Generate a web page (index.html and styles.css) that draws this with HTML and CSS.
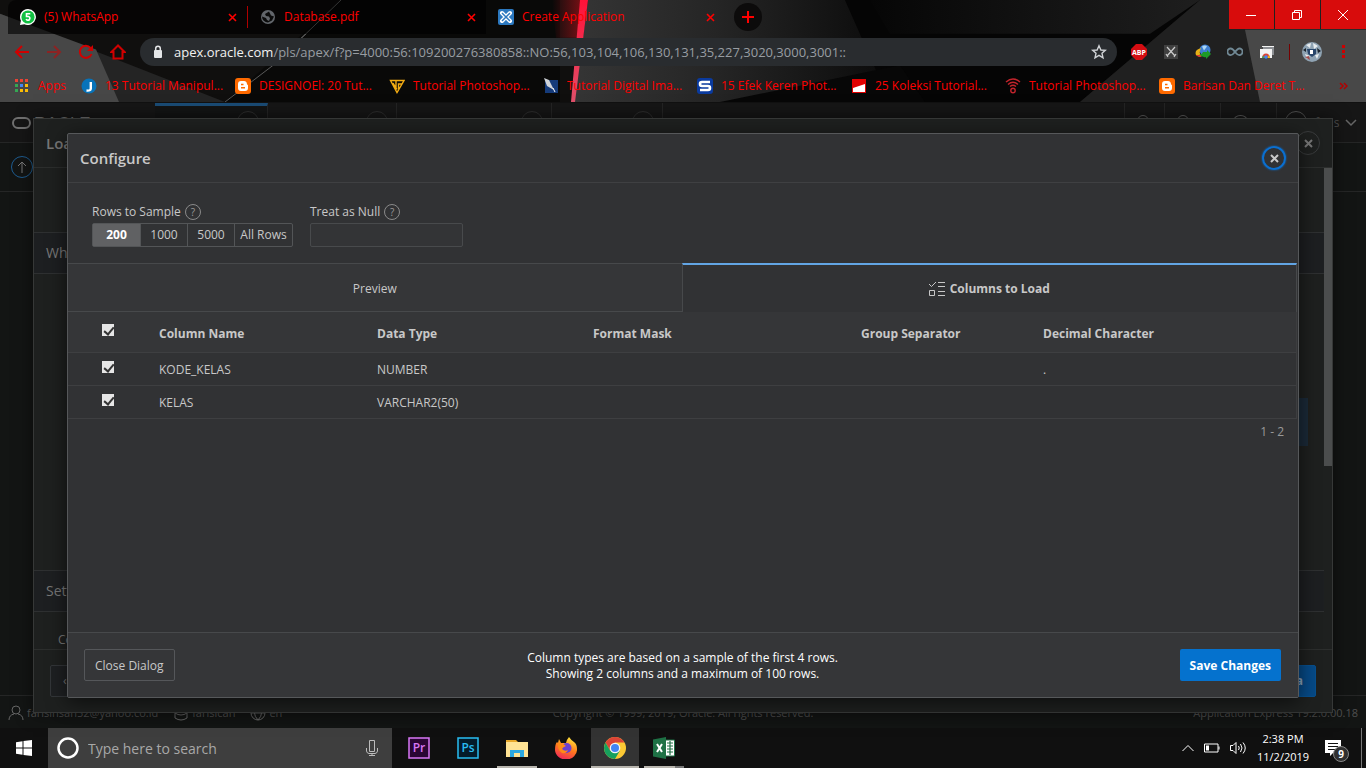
FILE: index.html
```
<!DOCTYPE html>
<html lang="en">
<head>
<meta charset="utf-8">
<title>Create Application</title>
<link rel="stylesheet" href="styles.css">
</head>
<body>
<header class="browser">
  <svg class="theme" viewBox="0 0 1366 103" preserveAspectRatio="none" aria-hidden="true">
    <defs>
      <linearGradient id="mid" x1="0" x2="1"><stop offset="0" stop-color="#353535"/><stop offset=".45" stop-color="#252525"/><stop offset="1" stop-color="#0b0b0b"/></linearGradient>
      <linearGradient id="glow" x1="0" x2="1"><stop offset="0" stop-color="#b01018" stop-opacity="0"/><stop offset="1" stop-color="#c01018" stop-opacity=".6"/></linearGradient>
      <linearGradient id="beam" x1="0" x2="0" y1="0" y2="1"><stop offset="0" stop-color="#ff1238"/><stop offset="1" stop-color="#e0506a"/></linearGradient>
      <linearGradient id="east" x1="0" x2="1"><stop offset="0" stop-color="#060606"/><stop offset="1" stop-color="#1e1e1e"/></linearGradient>
    </defs>
    <path fill="#100f0e" d="M0 0H1366V103H0z"/>
    <path fill="#242424" d="M0 14 225 103H0z"/>
    <path fill="#474747" d="M0 14 96 50 119 103H0z"/>
    <path fill="#000" opacity=".4" d="M225 103 341 0H560V103z"/>
    <path stroke="#8a8a8a" stroke-width="1" d="M341 0 273 66"/>
    <path stroke="#5a5a5a" stroke-width="1" d="M273 66 225 103"/>
    <path fill="url(#mid)" d="M588 0H845L890 103H574z"/>
    <path fill="#050505" d="M845 0H1200L1080 103H890z"/>
    <path fill="url(#east)" d="M870 0H1200L1150 34H890z"/>
    <path fill="#070707" d="M720 103 900 66 925 103z"/>
    <path fill="url(#glow)" d="M552 0H582L579 38H556z"/>
    <path fill="url(#beam)" d="M580 0H588L575 103H571z"/>
    <path fill="#202020" d="M1200 0H1366V103H1080z"/>
    <path fill="#484848" d="M1245 30H1366V103H1260z"/>
  </svg>
  <div class="tabstrip">
    <div class="tab">
      <svg class="i16" viewBox="0 0 16 16"><path fill="#fff" d="M8 0a8 8 0 1 1-3.600 15.200L0 16l.9-4.300A8 8 0 0 1 8 0z"/><circle cx="8" cy="8" r="6.600" fill="#12c143"/><path fill="none" stroke="#fff" stroke-width="1.600" d="M10.300 4.800H6.500V7.500H8.500a1.900 1.900 0 1 1-2.300 2.500"/></svg>
      <span>(5) WhatsApp</span><button class="x" aria-label="Close WhatsApp tab"><svg class="i9" viewBox="0 0 9 9"><path d="M1 1 8 8M8 1 1 8"/></svg></button>
    </div>
    <div class="tab divided">
      <svg class="i16" viewBox="0 0 16 16"><circle cx="8" cy="8" r="7" fill="#62666b"/><path fill="#0b0b0b" d="M9 2.500 5 5l1 2 3 .5 1 2-1 2.500-2-1-1-2-4-1.500a6 6 0 0 0 6 6l4-2 2-4-3-1-1-2z"/></svg>
      <span>Database.pdf</span><button class="x" aria-label="Close Database tab"><svg class="i9" viewBox="0 0 9 9"><path d="M1 1 8 8M8 1 1 8"/></svg></button>
    </div>
    <div class="tab active">
      <svg class="i16" viewBox="0 0 16 16"><rect width="16" height="16" rx="2" fill="#2b78bf"/><g stroke="#fff" stroke-width="4" stroke-linecap="round"><path d="M4 4 12 12M12 4 4 12"/></g><g stroke="#2b78bf" stroke-width="1.500"><path d="M4 4 12 12M12 4 4 12"/></g></svg>
      <span>Create Application</span><button class="x" aria-label="Close Create Application tab"><svg class="i9" viewBox="0 0 9 9"><path d="M1 1 8 8M8 1 1 8"/></svg></button>
    </div>
    <button class="newtab" aria-label="New tab"><svg width="12" height="12" viewBox="0 0 12 12"><path d="M6 0V12M0 6H12"/></svg></button>
    <div class="winbtns">
      <button aria-label="Minimize"><svg width="12" height="12" viewBox="0 0 12 12"><path d="M1 6.500H11"/></svg></button>
      <button aria-label="Restore"><svg width="12" height="12" viewBox="0 0 12 12"><path d="M1.500 3.500H8.500V10.500H1.500zM3.500 3V1.500H10.500V8.500H9"/></svg></button>
      <button aria-label="Close"><svg width="12" height="12" viewBox="0 0 12 12"><path d="M1 1 11 11M11 1 1 11"/></svg></button>
    </div>
  </div>
  <div class="toolbar">
    <div class="nav">
      <button aria-label="Back"><svg class="i16" viewBox="0 0 16 16"><path d="M15 8H2M8 2 2 8 8 14"/></svg></button>
      <button class="dim" aria-label="Forward"><svg class="i16" viewBox="0 0 16 16"><path d="M1 8H14M8 2 14 8 8 14"/></svg></button>
      <button aria-label="Reload"><svg class="i16" viewBox="0 0 16 16"><path d="M13.500 10A6 6 0 1 1 12.500 4"/><path fill="#d00000" stroke="none" d="M15 1V7H9z"/></svg></button>
      <button aria-label="Home"><svg class="i16" viewBox="0 0 16 16"><path d="M8 1.500 1.500 8H3.500V14.500H12.500V8H14.500z"/></svg></button>
    </div>
    <div class="url">
      <svg width="10" height="14" viewBox="0 0 10 14"><rect x="1" y="5" width="8" height="8" rx="1" fill="#e4e6e8"/><path fill="none" stroke="#e4e6e8" stroke-width="1.500" d="M2.700 6V3.500a2.300 2.300 0 0 1 4.600 0V6"/></svg>
      <p><b>apex.oracle.com</b>/pls/apex/f?p=4000:56:109200276380858::NO:56,103,104,106,130,131,35,227,3020,3000,3001::</p>
      <button class="star" aria-label="Bookmark this page"><svg class="i16" viewBox="0 0 16 16"><path fill="none" stroke="#d0d3d6" stroke-width="1.400" d="M8 1.800 9.900 6l4.400.4L11 9.300 12 13.800 8 11.400 4 13.800 5 9.300 1.700 6.400 6.100 6z"/></svg></button>
    </div>
    <div class="exts">
      <svg class="i16" viewBox="0 0 16 16"><path fill="#d40d12" d="M5 0H11L16 5V11L11 16H5L0 11V5z"/><text x="8" y="11" class="abp">ABP</text></svg>
      <svg class="i16" viewBox="0 0 16 16"><rect x="1" y="1" width="14" height="14" fill="#404040"/><path stroke="#ccc" stroke-width="1.200" d="M4 3 12 12M12 3 4 12M3 10 5 13M13 10 11 13"/></svg>
      <svg class="i16" viewBox="0 0 16 16"><circle cx="10" cy="6" r="5.500" fill="#3f7fd0"/><path fill="#a9d5f5" d="M7 2.500q3-2 5 0l-3 4z"/><path fill="#e8b117" d="M6 4Q-1 6 1 11q3 3 6 1-4-2-1-8z"/><path fill="#d33" d="M1 11q3 3 6 1l-2-1z"/><path fill="#1d9a25" d="M8 8h4V6l4 4-5 5v-2Q7 14 4 10q3 1 4-2z"/></svg>
      <svg class="i16" viewBox="0 0 16 16"><path fill="none" stroke="#708894" stroke-width="1.800" d="M8 8C6 5 5 4.500 3.700 4.500a3.300 3.300 0 0 0 0 6.600C5 11.100 6 10.500 8 8s3-3.500 4.300-3.500a3.300 3.300 0 0 1 0 6.600C11 11.100 10 10.500 8 8z"/></svg>
      <svg class="i16" viewBox="0 0 16 16"><rect x="4" y="2" width="11" height="9" fill="#8d9094"/><path stroke="#f3f3f3" d="M3 2.500H15"/><rect x="1" y="5" width="12" height="9" fill="#f3f3f3"/><path fill="#db4437" d="M3 14a4 4.500 0 0 1 8 0z"/><path fill="#3aa757" d="M3 14 4 11.500l2 2.500z"/><path fill="#f4c20d" d="M8.500 14l1.500-3 1 3z"/><circle cx="7" cy="13" r="1.700" fill="#4285f4"/></svg>
    </div>
    <span class="sep"></span>
    <svg class="avatar" viewBox="0 0 20 20"><circle cx="10" cy="10" r="10" fill="#8fa3b3"/><path fill="#e8edf0" d="M4 3 9 1 8 6zM11 1l5 3-4 3zM3 12l5 2-3 3zM13 13l4-1-2 5z"/><path fill="#28466b" d="M5 7H14V12L10 15 6 12z"/><path fill="#fff" d="M8 8h3v4H8z"/><path fill="#a04b4b" d="M3 15l4-1 1 4z"/><path fill="#1c2630" d="M15 6l4 3-3 2zM1 8l3-2v4z"/></svg>
    <button class="more" aria-label="Menu"><svg width="4" height="14" viewBox="0 0 4 14"><path d="M0 0H3V3H0zM0 5H3V8H0zM0 10H3V13H0z"/></svg></button>
  </div>
  <nav class="bookmarks">
    <a href="#" class="apps"><svg class="i16" viewBox="0 0 16 16"><path fill="#ea4335" d="M1 1H4V4H1zM6 1H9V4H6zM11 1H14V4H11z"/><path fill="#34a853" d="M1 6H4V9H1zM1 11H4V14H1z"/><path fill="#4285f4" d="M6 6H9V9H6z"/><path fill="#fbbc05" d="M11 6H14V9H11zM6 11H9V14H6zM11 11H14V14H11z"/></svg><span>Apps</span></a>
    <a href="#"><svg class="i16" viewBox="0 0 16 16"><circle cx="8" cy="8" r="7.500" fill="#0873b9"/><path fill="none" stroke="#fff" stroke-width="2.400" d="M9.800 4V10.500q0 2.500-4.300 2"/></svg><span>13 Tutorial Manipul...</span></a>
    <a href="#"><svg class="i16" viewBox="0 0 16 16"><rect width="16" height="16" rx="3" fill="#ff6a00"/><path fill="#fff" d="M6 3H9q3 0 3 3.500 1 0 1 1V10q0 3-3 3H6q-3 0-3-3V6q0-3 3-3z"/><path stroke="#ff6a00" stroke-width="1.500" d="M6 6.500H8.500M6 9.800H10"/></svg><span>DESIGNOEl: 20 Tut...</span></a>
    <a href="#"><svg class="i16" viewBox="0 0 16 16"><path fill="none" stroke="#f2ab13" stroke-width="1.400" d="M1.500 2.500H15L8 14.500zM4 5 8 11.500M7 3V11M9.500 11V6H13"/></svg><span>Tutorial Photoshop...</span></a>
    <a href="#"><svg class="i16" viewBox="0 0 16 16"><path fill="#153b7a" d="M2 2H15V15H2z"/><path fill="#cfd3d8" d="M1 0 6 2 11 12 4 8z"/><path stroke="#fff" d="M10 10 12 14"/></svg><span>Tutorial Digital Ima...</span></a>
    <a href="#"><svg class="i16" viewBox="0 0 16 16"><rect width="16" height="16" rx="3" fill="#0a3a9e"/><path fill="none" stroke="#fff" stroke-width="2.600" d="M13 4H5Q3 4 3 6T5 8H11Q13 8 13 10T11 12H3"/></svg><span>15 Efek Keren Phot...</span></a>
    <a href="#"><svg class="i16" viewBox="0 0 16 16"><rect x="1" y="1" width="14" height="14" fill="#e00000"/><path fill="#fff" d="M2 14V10L14 6V14z"/></svg><span>25 Koleksi Tutorial...</span></a>
    <a href="#"><svg class="i16" viewBox="0 0 16 16"><g fill="none" stroke="#c2242c" stroke-width="1.400"><path d="M1 4Q8-2 15 4M3 6.500Q8 2 13 6.500M5 8.500Q8 6 11 8.500"/><circle cx="8" cy="12.500" r="2.200"/></g></svg><span>Tutorial Photoshop...</span></a>
    <a href="#"><svg class="i16" viewBox="0 0 16 16"><rect width="16" height="16" rx="3" fill="#ff6a00"/><path fill="#fff" d="M6 3H9q3 0 3 3.500 1 0 1 1V10q0 3-3 3H6q-3 0-3-3V6q0-3 3-3z"/><path stroke="#ff6a00" stroke-width="1.500" d="M6 6.500H8.500M6 9.800H10"/></svg><span>Barisan Dan Deret T...</span></a>
    <button class="overflow" aria-label="More bookmarks"><svg width="9" height="8" viewBox="0 0 9 8"><path d="M1 1 4 4 1 7M5 1 8 4 5 7"/></svg></button>
  </nav>
</header>

<main class="page">
  <div class="apex">
    <div class="topbar">
      <div class="logo"><i></i><span>RACLE</span></div>
      <div class="menu current"><i></i></div>
      <div class="menu m2"><i></i></div>
      <div class="menu m3"><i></i></div>
      <div class="menu m4"><i></i></div>
      <div class="tools">
        <div class="tool t1"><i></i></div><div class="tool t2"><i></i></div><div class="tool t2"><i class="wide"></i></div>
        <div class="user"><i class="ring"></i><span>faris</span><svg width="12" height="8" viewBox="0 0 12 8"><path fill="none" stroke="#666" stroke-width="1.500" d="M1 1 6 6 11 1"/></svg></div>
      </div>
    </div>
    <div class="crumbs"><button aria-label="Up"><svg width="12" height="12" viewBox="0 0 12 12"><path fill="none" stroke="#777" d="M6 12V1M2 5 6 1 10 5"/></svg></button></div>
    <footer class="apexfoot">
      <div class="who">
        <svg class="i16" viewBox="0 0 16 16"><circle cx="8" cy="5" r="4"/><path d="M1 15q0-5 5-6M15 15q0-5-5-6"/></svg><span>farisinsan52@yahoo.co.id</span>
        <svg class="i16 db" viewBox="0 0 16 16"><ellipse cx="8" cy="3" rx="6" ry="2"/><path d="M2 3V13q6 4 12 0V3M2 8q6 4 12 0"/></svg><span>farisican</span>
        <svg class="i16 db" viewBox="0 0 16 16"><circle cx="8" cy="8" r="7"/><path d="M1 8H15M8 1Q1 8 8 15M8 1q7 7 0 14"/></svg><span>en</span>
      </div>
      <div>Copyright © 1999, 2019, Oracle. All rights reserved.</div>
      <div class="ver">Application Express 19.2.0.00.18</div>
    </footer>
  </div>

  <section class="outer" aria-label="Load Data">
    <div class="ohead"><h2>Load</h2><button aria-label="Close Load Data"><svg class="i9" viewBox="0 0 9 9"><path d="M1 1 8 8M8 1 1 8"/></svg></button></div>
    <div class="obody">
      <div class="ocontent">
        <h3 class="first">What</h3>
        <div class="ospace"><span class="hl"></span></div>
        <h3>Settings</h3>
        <p>Col</p>
      </div>
      <div class="scroll"><span></span></div>
    </div>
    <div class="ofoot"><button class="back">‹</button><button class="load">Load Data</button></div>
  </section>

  <section class="dialog" role="dialog" aria-labelledby="dlg-title">
    <div class="dhead"><h1 id="dlg-title">Configure</h1><button aria-label="Close"><svg class="i9" viewBox="0 0 9 9"><path d="M1 1 8 8M8 1 1 8"/></svg></button></div>
    <form class="config">
      <fieldset>
        <legend>Rows to Sample</legend><button type="button" class="help" aria-label="Help: Rows to Sample">?</button>
        <div class="pills">
          <label><input type="radio" name="rows" checked><span>200</span></label>
          <label><input type="radio" name="rows"><span>1000</span></label>
          <label><input type="radio" name="rows"><span>5000</span></label>
          <label><input type="radio" name="rows"><span>All Rows</span></label>
        </div>
      </fieldset>
      <div class="field">
        <label for="nullas">Treat as Null</label><button type="button" class="help" aria-label="Help: Treat as Null">?</button>
        <input id="nullas" type="text">
      </div>
    </form>
    <div class="dtabs" role="tablist">
      <button role="tab">Preview</button>
      <button role="tab" class="on" aria-selected="true"><svg class="i16" viewBox="0 0 16 16"><path fill="none" stroke="#c8c8c8" d="M0 3 2.500 5.500 7 1M9 1.500H16M9 5.500H16M.5 9.500H5.500V14.500H.5zM9 10.500H16M9 14.500H16"/></svg>Columns to Load</button>
    </div>
    <div class="grid">
      <table>
        <colgroup><col class="c1"><col class="c2"><col class="c3"><col class="c4"><col class="c5"><col></colgroup>
        <thead><tr><th><input type="checkbox" checked aria-label="Select all columns"></th><th>Column Name</th><th>Data Type</th><th>Format Mask</th><th>Group Separator</th><th>Decimal Character</th></tr></thead>
        <tbody>
          <tr><td><input type="checkbox" checked aria-label="Load KODE_KELAS"></td><td>KODE_KELAS</td><td>NUMBER</td><td></td><td></td><td>.</td></tr>
          <tr><td><input type="checkbox" checked aria-label="Load KELAS"></td><td>KELAS</td><td>VARCHAR2(50)</td><td></td><td></td><td></td></tr>
        </tbody>
      </table>
      <p class="count">1 - 2</p>
    </div>
    <div class="dfoot">
      <button class="close">Close Dialog</button>
      <p>Column types are based on a sample of the first 4 rows.<br>Showing 2 columns and a maximum of 100 rows.</p>
      <button class="save">Save Changes</button>
    </div>
  </section>
</main>

<footer class="taskbar">
  <button class="start" aria-label="Start"><svg class="i16" viewBox="0 0 16 16"><path fill="#fff" d="M0 2.200 6.500 1.300V7.500H0zM7.500 1.100 16 0V7.500H7.500zM0 8.500H6.500V14.700L0 13.800zM7.500 8.500H16V16L7.500 14.900z"/></svg></button>
  <div class="search">
    <svg width="22" height="22" viewBox="0 0 22 22"><circle cx="11" cy="11" r="9.500" fill="none" stroke="#fff" stroke-width="2.500"/></svg>
    <input type="text" placeholder="Type here to search" aria-label="Search">
    <svg width="12" height="16" viewBox="0 0 12 16"><path fill="none" stroke="#bbb" d="M3.500 .5H8.500V11.500H3.500zM.5 8V11Q1 13.500 3 13.500H9Q11 13.500 11.500 11V8M6 14V15.500M3 15.500H9"/></svg>
  </div>
  <div class="launch">
    <button aria-label="Premiere Pro"><svg viewBox="0 0 22 22"><rect x="1" y="1" width="20" height="20" fill="#2a0634" stroke="#d877f5" stroke-width="1.500"/><text x="11" y="15" fill="#d877f5">Pr</text></svg></button>
    <button aria-label="Photoshop"><svg viewBox="0 0 22 22"><rect x="1" y="1" width="20" height="20" fill="#041c2b" stroke="#29bdf2" stroke-width="1.500"/><text x="11" y="15" fill="#29bdf2">Ps</text></svg></button>
    <button class="run" aria-label="File Explorer"><svg viewBox="0 0 22 22"><path fill="#e9a92b" d="M0 3H10L12 5H21V9H0z"/><path fill="#ffe394" d="M0 5H22V20H0z"/><path fill="#2ca8e0" d="M4 20V13H18V20H14V16H8V20z"/></svg></button>
    <button aria-label="Firefox"><svg viewBox="0 0 22 22"><defs><linearGradient id="fx" x1=".7" x2=".3" y1="0" y2="1"><stop offset="0" stop-color="#ffe63b"/><stop offset=".5" stop-color="#ff7a1c"/><stop offset="1" stop-color="#f0265a"/></linearGradient></defs><path fill="url(#fx)" d="M14 0q2 3 5 5t3 7a11 10 0 0 1-22 1Q0 7 2 5l1 1 1-4 2 4h5q1-4 3-6z"/><circle cx="11.500" cy="11" r="5" fill="#6b3fd0"/><path fill="#ff8a17" d="M3 6q5 0 8 3-3 1-4 3 3 3 6 1-2 4-6 3-5-3-4-10z"/></svg></button>
    <button class="run cur" aria-label="Chrome"><svg viewBox="0 0 22 22"><circle cx="11" cy="11" r="11" fill="#fcc934"/><path fill="#db4437" d="M1.500 5.500A11 11 0 0 1 20.500 5.500H11L6.200 13.700z"/><path fill="#16a05d" d="M1.500 5.500A11 11 0 0 0 11 22L15.800 13.700 6.200 13.700z"/><circle cx="11" cy="11" r="5.300" fill="#f5f5f5"/><circle cx="11" cy="11" r="4" fill="#4285f4"/></svg></button>
    <button class="run multi" aria-label="Excel"><svg viewBox="0 0 22 22"><path fill="#fff" stroke="#1e7145" d="M12 3H21.500V19H12z"/><path stroke="#1e7145" stroke-width="1.200" d="M14 6H20M14 9H20M14 12H20M14 15H20M17 4V18"/><path fill="#1e7145" d="M0 2.500 13 0V22L0 19.500z"/><path stroke="#fff" stroke-width="2" d="M4 7 9 15M9 7 4 15"/></svg></button>
  </div>
  <div class="tray">
    <svg width="12" height="8" viewBox="0 0 12 8"><path d="M.5 7 6 1.500 11.500 7"/></svg>
    <svg width="16" height="10" viewBox="0 0 16 10"><path d="M.5 1H14V9H.5zM15 3.500V6.500"/><path fill="#fff" stroke="none" d="M2 2.500H5V7.500H2z"/></svg>
    <svg width="17" height="14" viewBox="0 0 17 14"><path d="M.5 4.500H3L6 1.500V12.500L3 9.500H.5zM8.500 5Q10 7 8.500 9M10.500 3Q13.500 7 10.500 11M13 1.500Q17.500 7 13 12.500"/></svg>
    <div class="clock"><span>2:38 PM</span><span>11/2/2019</span></div>
    <div class="notif"><svg width="16" height="16" viewBox="0 0 16 16"><path fill="#fff" stroke="none" d="M0 0H16V13H8L5 16V13H0z"/><path stroke="#111" d="M3 3.500H13M3 6.500H13M3 9.500H13"/></svg><b>9</b></div>
    <span class="peek"></span>
  </div>
</footer>
</body>
</html>
```
FILE: styles.css
```
* { box-sizing: border-box; }
body { margin: 0; height: 100vh; display: flex; flex-direction: column; overflow: hidden; background: #131514; color: #c8c8c8; font: 12px/16px "Open Sans", "Noto Sans", sans-serif; }
button { padding: 0; border: 0; background: none; color: inherit; font: inherit; display: flex; align-items: center; justify-content: center; }
p, h1, h2, h3 { margin: 0; }
svg { flex: none; display: block; }
.i16 { width: 16px; height: 16px; }
.i9 { width: 9px; height: 9px; fill: none; stroke: currentColor; stroke-width: 2; }

/* browser chrome */
.browser { position: relative; flex: none; color: #ff0000; border-bottom: 1px solid #111; background: #100f0e; }
.theme { position: absolute; inset: 0; width: 100%; height: 100%; }
.tabstrip, .toolbar, .bookmarks { position: relative; display: flex; align-items: center; }
.tabstrip { height: 34px; padding-left: 8px; }
.tab { width: 239px; height: 34px; padding: 0 10px 0 12px; display: flex; align-items: center; gap: 8px; background: rgba(0,0,0,.62); }
.tab:first-child { border-radius: 8px 0 0 0; }
.tab span { flex: 1; white-space: nowrap; }
.divided { border-left: 1px solid #700; border-image: linear-gradient(transparent 20%, #b00000 20%, #b00000 80%, transparent 80%) 1; border-width: 0 0 0 1px; }
.tab.active { background: none; }
.tab .x { width: 10px; height: 16px; }
.tab .i9 { stroke-width: 1.600; }
.newtab { width: 28px; height: 28px; margin-left: 9px; border-radius: 50%; background: #0c0b0b; }
.newtab svg { stroke: #f00; stroke-width: 2; }
.winbtns { display: flex; gap: 1px; margin-left: auto; align-self: flex-start; }
.winbtns button { width: 45px; height: 29px; padding-right: 2px; background: #d80c0c; }
.winbtns svg { fill: none; stroke: #fff; }
.toolbar { height: 36px; padding: 0 20px 0 14px; }
.nav { display: flex; gap: 16px; width: 126px; }
.nav svg { fill: none; stroke: #d00000; stroke-width: 2; }
.nav .dim { opacity: .5; }
.url { flex: 1; height: 28px; border-radius: 14px; background: #292c2f; display: flex; align-items: center; gap: 11px; padding: 0 10px 0 13px; min-width: 0; }
.url p { flex: 1; font-size: 13px; color: #989da2; white-space: nowrap; overflow: hidden; }
.url b { font-weight: 400; color: #f2f2f2; }
.exts { display: flex; gap: 16px; margin-left: 14px; }
.abp { font: bold 7px "Open Sans", sans-serif; fill: #fff; text-anchor: middle; }
.sep { width: 1px; height: 16px; background: #700; margin: 0 12px 0 14px; }
.avatar { width: 20px; height: 20px; }
.more { margin-left: 20px; }
.more svg { fill: #c00; }
.bookmarks { height: 32px; padding-left: 14px; }
.bookmarks a { width: 154px; flex: 0 0 auto; display: flex; gap: 8px; color: #ff0000; text-decoration: none; white-space: nowrap; }
.bookmarks .apps { width: 67px; }
.overflow { margin: 0 18px 0 auto; }
.overflow svg { fill: none; stroke: #b00000; stroke-width: 1.500; }

/* application under the dialogs */
.page { position: relative; flex: 1; min-height: 0; }
.apex { height: 100%; display: flex; flex-direction: column; color: #505050; }
.topbar { height: 40px; display: flex; background: #161616; border-bottom: 1px solid #252626; }
.logo { width: 155px; padding: 14px 0 0 12px; display: flex; font: 17px/13px "Liberation Sans", sans-serif; color: #707070; }
.logo i { width: 19px; height: 12px; margin-right: 3px; border: 2px solid #707070; border-radius: 6px; }
.menu { border-right: 1px solid #242424; display: flex; justify-content: flex-end; padding: 8px 8px 0 0; overflow: hidden; }
.menu i, .ring { flex: none; width: 22px; height: 22px; border: 1px solid #2c2c2c; border-radius: 50%; }
.current { width: 113px; border-top: 3px solid #1a4c76; padding-top: 5px; background: #131414; }
.m2 { width: 129px; }
.m3 { width: 155px; }
.m4 { width: 111px; }
.tools { display: flex; margin-left: auto; }
.tool { border-left: 1px solid #242424; padding: 12px 0 0 12px; }
.tool i { display: block; width: 12px; height: 12px; border: 1px solid #5a5a5a; border-radius: 50%; }
.tool .wide { width: 15px; }
.t1 { width: 40px; }
.t2 { width: 56px; }
.user { width: 90px; border-left: 1px solid #242424; display: flex; align-items: flex-start; padding: 8px 10px 0 8px; gap: 8px; }
.user .ring { border-color: #505050; }
.user span { width: 22px; padding-top: 4px; }
.user svg { margin-top: 8px; }
.crumbs { height: 49px; padding: 13px 11px; border-bottom: 1px solid #252626; }
.crumbs button { width: 22px; height: 22px; border: 1px solid #1e5c90; border-radius: 50%; }
.apexfoot { margin-top: auto; height: 33px; padding: 1px 8px 0; border-top: 1px solid #252626; display: grid; grid-template-columns: 1fr auto 1fr; align-items: center; font-size: 11px; }
.who { display: flex; align-items: center; gap: 3px; }
.who svg { fill: none; stroke: #666; }
.who .db { margin-left: 12px; }
.ver { text-align: right; }

/* first dialog */
.outer { position: absolute; inset: 15px 33px 15px 33px; background: #1e201f; border: 1px solid #363837; display: flex; flex-direction: column; color: #777; box-shadow: 0 0 16px #0008; }
.ohead { height: 49px; padding: 0 12px; border-bottom: 1px solid #2c2e2d; display: flex; align-items: center; justify-content: space-between; }
.ohead h2 { font: 600 15px/20px "Open Sans", sans-serif; }
.ohead button { width: 24px; height: 24px; border: 1px solid #393b3c; border-radius: 50%; }
.obody { flex: 1; min-height: 0; display: flex; }
.ocontent { flex: 1; display: flex; flex-direction: column; min-width: 0; }
.ocontent h3 { height: 42px; flex: none; padding: 0 12px; border: solid #2e3031; border-width: 1px 0; background: #1d1f21; font: 14px/40px "Open Sans", sans-serif; }
.ocontent .first { margin-top: 64px; }
.ospace { flex: 1; padding: 124px 16px 0 0; }
.hl { display: block; width: 40px; height: 48px; margin-left: auto; background: #1b2a38; }
.ocontent p { height: 37px; padding: 20px 24px 0; }
.scroll { width: 8px; }
.scroll span { display: block; height: 62%; background: #4b4d4d; }
.ofoot { height: 63px; padding: 15px 16px; border-top: 1px solid #2c2e2d; display: flex; justify-content: space-between; }
.ofoot button { height: 32px; padding: 0 12px; border: 1px solid #333639; border-radius: 2px; background: #1e2022; }
.ofoot .load { background: #064a87; border-color: #07508f; color: #8ea6bc; font-weight: 700; }

/* configure dialog */
.dialog { position: absolute; inset: 30px 67px; background: #313234; border: 1px solid #56585a; border-radius: 2px; display: flex; flex-direction: column; box-shadow: 0 4px 20px #0009; }
.dhead { height: 49px; padding: 0 12px; border-bottom: 1px solid #3f4042; display: flex; align-items: center; justify-content: space-between; }
.dhead h1 { font: 600 15px/20px "Open Sans", sans-serif; }
.dhead button { width: 24px; height: 24px; border: 2px solid #0a6fd0; border-radius: 50%; box-shadow: 0 0 2px #0a6fd0; }
.config { height: 80px; padding: 21px 24px 0; display: flex; gap: 17px; }
fieldset, .field { border: 0; padding: 0; margin: 0; display: grid; grid-template-columns: auto 1fr; column-gap: 4px; align-content: start; align-items: center; row-gap: 3px; }
legend { float: left; padding: 0; }
.help { width: 16px; height: 16px; border: 1px solid #8a8a8a; border-radius: 50%; color: #999; font-size: 10px; }
.pills { grid-column: 1 / 3; display: flex; border: 1px solid #535557; border-radius: 2px; height: 24px; line-height: 22px; }
.pills label { position: relative; width: 47px; text-align: center; border-left: 1px solid #535557; }
.pills label:first-child { border-left: 0; }
.pills label:last-child { width: 58px; }
.pills input { position: absolute; inset: 0; margin: 0; opacity: 0; }
.pills span { display: block; }
.pills input:checked + span { background: #606163; color: #fff; font-weight: 700; }
.field input { grid-column: 1 / 3; width: 153px; height: 24px; background: #333436; border: 1px solid #484a4c; border-radius: 2px; color: inherit; font: inherit; }
.dtabs { display: flex; height: 49px; margin-right: 1px; border-bottom: 1px solid #47494b; background: #353638; }
.dtabs button { flex: 1; border-top: 1px solid #47494b; padding-top: 2px; gap: 5px; }
.dtabs .on { font-weight: 700; height: 49px; padding-top: 0; background: #313234; border: 1px solid #47494b; border-top: 2px solid #62a5e4; border-bottom: 0; }
.grid { flex: 1; margin-right: 1px; min-height: 0; }
table { width: 100%; border-collapse: separate; border-spacing: 0; table-layout: fixed; border-right: 1px solid #3d3e40; }
.c1 { width: 79px; } .c2 { width: 218px; } .c3 { width: 216px; } .c4 { width: 268px; } .c5 { width: 182px; }
th, td { padding: 1px 12px 0; text-align: left; height: 33px; border-bottom: 1px solid #3e3f41; }
th { height: 41px; padding-top: 3px; background: #353638; font-weight: 700; }
th:first-child, td:first-child { text-align: center; vertical-align: top; padding-top: 8px; }
th:first-child { padding-top: 12px; }
table input { appearance: none; display: block; width: 12px; height: 12px; margin: 0 auto; background: #e6e6e6; position: relative; }
table input::after { content: ""; position: absolute; left: 4px; top: 1px; width: 4px; height: 8px; border: solid #333; border-width: 0 2px 2px 0; transform: rotate(40deg); }
.count { padding: 5px 13px; text-align: right; color: #999; }
.dfoot { height: 65px; padding: 0 17px 0 16px; border-top: 1px solid #47494b; background: #353638; display: grid; grid-template-columns: 1fr auto 1fr; align-items: center; }
.dfoot p { padding-top: 2px; text-align: center; color: #fff; }
.dfoot button { height: 32px; padding: 2px 10px 0; border-radius: 2px; }
.close { border: 1px solid #55575a; justify-self: start; }
.save { background: #0572ce; color: #fff; font-weight: 700; justify-self: end; }

/* taskbar */
.taskbar { flex: none; height: 40px; background: #101010; display: flex; color: #fff; }
.start { width: 48px; }
.search { width: 344px; background: #3e3e3e; display: flex; align-items: center; padding: 0 14px 0 9px; gap: 8px; }
.search input { flex: 1; min-width: 0; border: 0; padding: 2px 1px 0; background: none; font: 14px/20px "Open Sans", sans-serif; color: #fff; }
.search input::placeholder { color: #a8a8a8; opacity: 1; }
.launch { display: flex; gap: 1px; padding-left: 3px; }
.launch button { width: 48px; border-top: 2px solid transparent; border-bottom: 2px solid transparent; }
.launch svg { width: 22px; height: 22px; }
.launch text { font: 600 12px "Open Sans", sans-serif; text-anchor: middle; }
.launch .run { border-style: solid; border-color: transparent; border-width: 2px 0; background: linear-gradient(90deg, transparent 4px, #b8b5ae 4px, #b8b5ae 44px, transparent 44px) bottom / 100% 2px no-repeat border-box; }
.launch .cur { background: #333; border-bottom-color: #b8b5ae; }
.launch .multi { background-image: linear-gradient(90deg, transparent 4px, #b8b5ae 4px, #b8b5ae 35px, #777 35px, #777 44px, transparent 44px); }
.tray { margin-left: auto; display: flex; align-items: center; gap: 10px; }
.tray svg { fill: none; stroke: #fff; }
.clock { display: flex; flex-direction: column; width: 52px; line-height: 18px; text-align: center; font-size: 11px; }
.notif { position: relative; margin-left: 6px; width: 28px; }
.notif b { position: absolute; left: 8px; top: 6px; width: 16px; height: 16px; border: 1px solid #888; border-radius: 50%; background: #303030; font-size: 10px; line-height: 14px; text-align: center; }
.peek { width: 1px; height: 40px; background: #777; margin-right: 4px; margin-left: -2px; }
```
